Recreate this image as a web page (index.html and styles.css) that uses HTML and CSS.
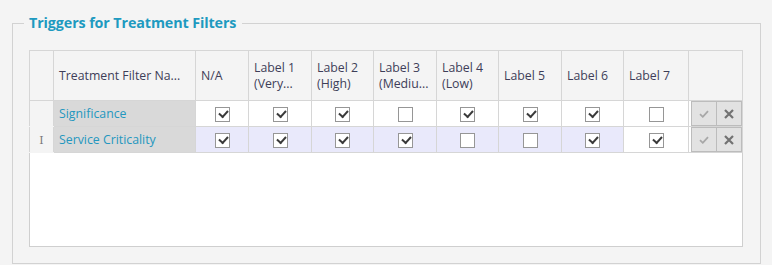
FILE: index.html
```html
<!DOCTYPE html>
<html>
<head>
<meta charset="utf-8">
<link rel="stylesheet" href="styles.css">
</head>
<body>
<div class="group">
  <span class="group-title">Triggers for Treatment Filters</span>
  <div class="grid">
    <table class="tbl">
      <colgroup>
        <col class="c-ind"><col class="c-name"><col class="c-na">
        <col class="c-a"><col class="c-b"><col class="c-a"><col class="c-b">
        <col class="c-a"><col class="c-b"><col class="c-l7"><col class="c-act">
      </colgroup>
      <thead>
        <tr>
          <th class="ind"></th>
          <th>Treatment Filter Na...</th>
          <th>N/A</th>
          <th>Label 1<br>(Very...</th>
          <th>Label 2<br>(High)</th>
          <th>Label 3<br>(Mediu...</th>
          <th>Label 4<br>(Low)</th>
          <th>Label 5</th>
          <th>Label 6</th>
          <th>Label 7</th>
          <th></th>
        </tr>
      </thead>
      <tbody>
        <tr class="row">
          <td class="ind"></td>
          <td class="name">Significance</td>
          <td class="cb"><span class="box on"></span></td>
          <td class="cb"><span class="box on"></span></td>
          <td class="cb"><span class="box on"></span></td>
          <td class="cb"><span class="box"></span></td>
          <td class="cb"><span class="box on"></span></td>
          <td class="cb"><span class="box on"></span></td>
          <td class="cb"><span class="box on"></span></td>
          <td class="cb"><span class="box"></span></td>
          <td class="act"><div class="btns">
            <span class="btn"><svg width="10" height="8" viewBox="0 0 10 8"><path d="M1 4.2 L3.8 6.8 L9 1.2" fill="none" stroke="#a8a8a8" stroke-width="1.8"/></svg></span>
            <span class="btn"><svg width="10" height="10" viewBox="0 0 10 10"><path d="M1 1 L9 9 M9 1 L1 9" fill="none" stroke="#727272" stroke-width="2.2"/></svg></span>
          </div></td>
        </tr>
        <tr class="row alt">
          <td class="ind"><span class="ibeam">I</span></td>
          <td class="name">Service Criticality</td>
          <td class="cb"><span class="box on"></span></td>
          <td class="cb"><span class="box on"></span></td>
          <td class="cb"><span class="box on"></span></td>
          <td class="cb"><span class="box on"></span></td>
          <td class="cb"><span class="box"></span></td>
          <td class="cb"><span class="box"></span></td>
          <td class="cb"><span class="box on"></span></td>
          <td class="cb focus"><span class="box on"></span></td>
          <td class="act"><div class="btns">
            <span class="btn"><svg width="10" height="8" viewBox="0 0 10 8"><path d="M1 4.2 L3.8 6.8 L9 1.2" fill="none" stroke="#a8a8a8" stroke-width="1.8"/></svg></span>
            <span class="btn"><svg width="10" height="10" viewBox="0 0 10 10"><path d="M1 1 L9 9 M9 1 L1 9" fill="none" stroke="#727272" stroke-width="2.2"/></svg></span>
          </div></td>
        </tr>
      </tbody>
    </table>
  </div>
</div>
</body>
</html>
```

FILE: styles.css
```css
html, body {
  margin: 0;
  padding: 0;
  background: #f4f4f4;
}
body {
  width: 772px;
  height: 265px;
  overflow: hidden;
  font-family: "Open Sans", "Noto Sans", sans-serif;
  font-size: 12.3px;
}
.group {
  position: relative;
  margin: 23px 0 0 12px;
  width: 747px;
  height: 239px;
  border: 1px solid #d2d2d2;
}
.group-title {
  position: absolute;
  left: 11px;
  top: -11px;
  padding: 0 6px 0 5px;
  background: #f4f4f4;
  color: #1e9ac0;
  font-weight: bold;
  font-size: 14.3px;
  line-height: 20px;
  letter-spacing: -0.1px;
}
.grid {
  margin: 26px 0 0 16px;
  width: 712px;
  height: 195px;
  border: 1px solid #cfcfcf;
  background: #ffffff;
}
.tbl {
  border-collapse: collapse;
  table-layout: fixed;
  width: 713px;
  margin: -1px 0 0 -1px;
}
.c-ind { width: 24px; }
.c-name { width: 142px; }
.c-na { width: 53px; }
.c-a { width: 63px; }
.c-b { width: 62px; }
.c-l7 { width: 65px; }
.c-act { width: 54px; }
.tbl th {
  height: 49px;
  padding: 0 0 0 5px;
  text-align: left;
  font-weight: normal;
  color: #3e3e58;
  background: #f4f4f4;
  border: 1px solid #d6d6d6;
  line-height: 16px;
  white-space: nowrap;
  overflow: hidden;
  vertical-align: middle;
}
.tbl td {
  height: 25px;
  padding: 0;
  border: 1px solid #d6d6d6;
  background: #ffffff;
}
.tbl .alt td {
  background: #e9e9fb;
}
.tbl td.ind, .tbl .alt td.ind {
  background: #f4f4f4;
  border-top-color: #f4f4f4;
  border-bottom-color: #f4f4f4;
  text-align: center;
}
.tbl td.name, .tbl .alt td.name {
  background: #d9d9d9;
  color: #2497bf;
  padding-left: 5px;
  white-space: nowrap;
}
.tbl .alt td.focus {
  background: #ffffff;
}
.tbl td.act, .tbl .alt td.act {
  background: #ffffff;
  padding: 0;
}
.ibeam {
  font-family: "DejaVu Serif", serif;
  font-size: 11px;
  color: #777;
}
.cb {
  text-align: center;
  vertical-align: middle;
}
.box {
  display: inline-block;
  width: 13px;
  height: 13px;
  border: 1px solid #969696;
  background: #ffffff;
  vertical-align: middle;
  position: relative;
}
.box.on::after {
  content: "";
  position: absolute;
  left: 3px;
  top: 2px;
  width: 7px;
  height: 4px;
  border-left: 2px solid #3a3a3a;
  border-bottom: 2px solid #3a3a3a;
  transform: rotate(-48deg);
  transform-origin: center;
}
.btns {
  display: flex;
  height: 25px;
  margin-left: 2px;
}
.btn {
  flex: 1;
  display: flex;
  align-items: center;
  justify-content: center;
  background: #e2e2e2;
  border: 1px solid #bcbcbc;
}
.btn + .btn {
  border-left: none;
}
```
